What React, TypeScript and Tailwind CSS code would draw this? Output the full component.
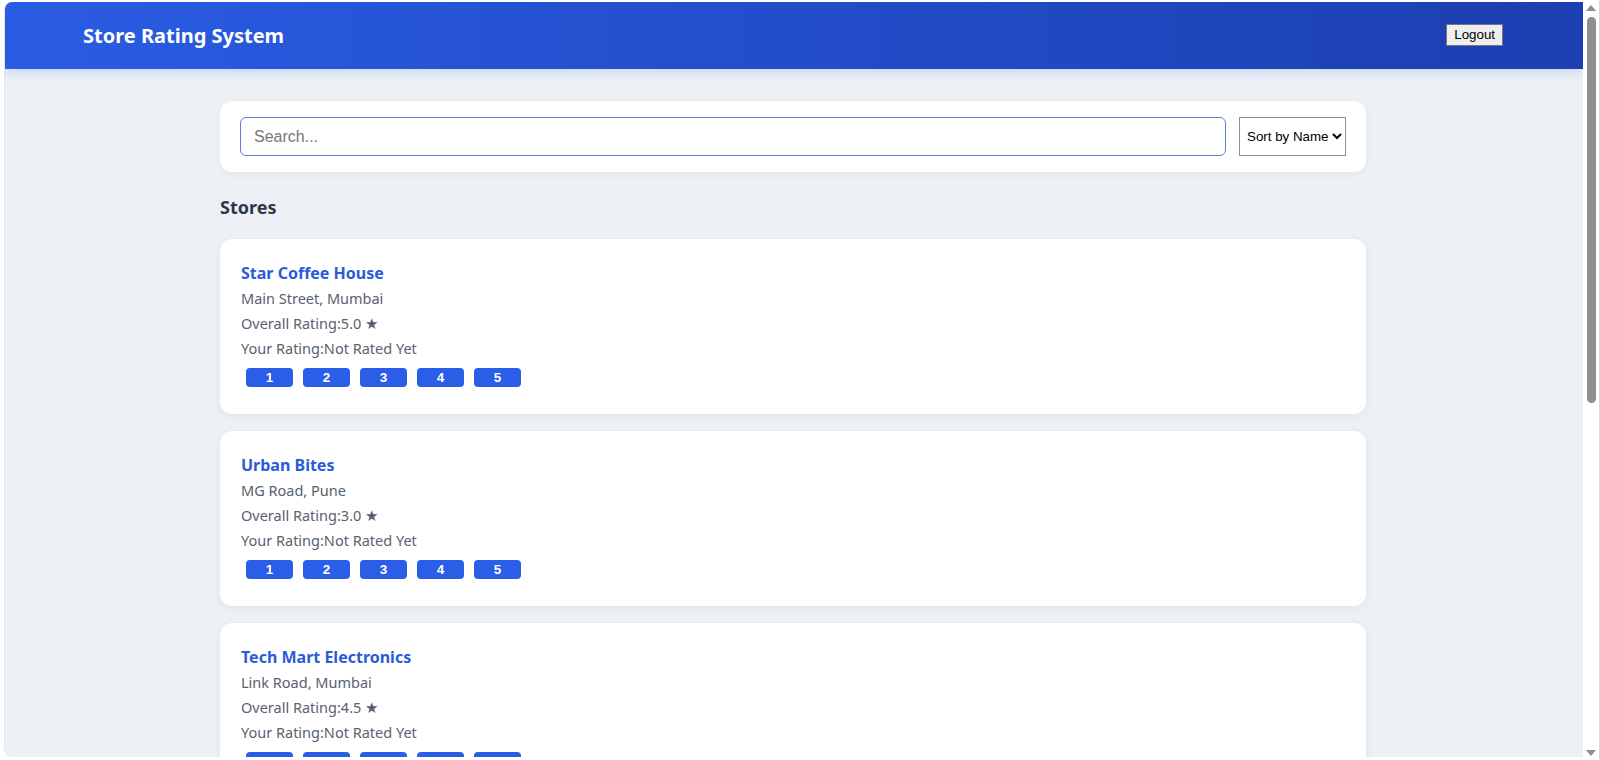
import React, { useState } from "react";

type Store = {
  id: number;
  name: string;
  address: string;
  rating: string;
};

const stores: Store[] = [
  { id: 1, name: "Star Coffee House", address: "Main Street, Mumbai", rating: "5.0" },
  { id: 2, name: "Urban Bites", address: "MG Road, Pune", rating: "3.0" },
  { id: 3, name: "Tech Mart Electronics", address: "Link Road, Mumbai", rating: "4.5" },
  { id: 4, name: "Green Grocers", address: "FC Road, Pune", rating: "4.0" },
];

const StoreCard: React.FC<{ store: Store }> = ({ store }) => (
  <div className="bg-white rounded-xl shadow-[0_2px_8px_rgba(0,0,0,0.06)] px-[21px] pt-[22px] pb-[27px]">
    <h3 className="text-[16px] leading-[24px] font-bold text-[#2b5bd8]">{store.name}</h3>
    <p className="mt-[1px] text-[14.5px] leading-[25px] text-[#596170]">{store.address}</p>
    <p className="text-[14.5px] leading-[25px] text-[#596170]">Overall Rating:{store.rating} ★</p>
    <p className="text-[14.5px] leading-[25px] text-[#596170]">Your Rating:Not Rated Yet</p>
    <div className="flex mt-[7px]">
      {[1, 2, 3, 4, 5].map((n) => (
        <button
          key={n}
          className="mx-[5px] w-[47px] h-[19px] rounded-[4px] bg-[#2b5ee6] text-white text-[13.5px] font-bold leading-[19px] font-['Liberation_Sans',Arial,sans-serif]"
        >
          {n}
        </button>
      ))}
    </div>
  </div>
);

const App: React.FC = () => {
  const [query, setQuery] = useState("");
  const [sort, setSort] = useState("name");

  return (
    <div className="w-[1600px] h-[760px] bg-white flex pl-[4px] pt-[2px] pb-[3px] overflow-hidden font-['Noto_Sans',sans-serif]">
      <div className="flex-1 flex flex-col rounded-l-lg overflow-hidden bg-[#edf1f6] border-l border-[#e2e5ea]">
        <header className="h-[67px] shrink-0 flex items-center justify-between pl-[78px] pr-[80px] bg-gradient-to-r from-[#2a5ce3] to-[#1c3fb1] shadow-[0_4px_10px_rgba(37,99,235,0.18)] relative z-10">
          <h1 className="text-white text-[20px] font-bold">Store Rating System</h1>
          <button className="px-[7px] h-[22px] -mt-[1px] bg-[#efefef] border border-[#767676] text-black text-[13.33px] leading-none font-['Liberation_Sans',Arial,sans-serif]">
            Logout
          </button>
        </header>

        <div className="pr-[2px]">
          <main className="w-[1146px] mx-auto pt-[32px]">
            <div className="bg-white rounded-xl shadow-[0_2px_8px_rgba(0,0,0,0.05)] px-[20px] py-[16px] flex gap-[13px]">
              <input
                autoFocus
                value={query}
                onChange={(e) => setQuery(e.target.value)}
                placeholder="Search..."
                className="flex-1 h-[39px] rounded-md border border-[#5b80d6] pl-[13px] text-[16px] outline-none font-['Liberation_Sans',Arial,sans-serif] placeholder:text-[#777]"
              />
              <select
                value={sort}
                onChange={(e) => setSort(e.target.value)}
                className="w-[107px] h-[39px] border border-[#8f8f8f] bg-white text-black text-[13.33px] pl-[3px] font-['Liberation_Sans',Arial,sans-serif]"
              >
                <option value="name">Sort by Name</option>
                <option value="rating">Sort by Rating</option>
              </select>
            </div>

            <h2 className="mt-[22px] mb-[18px] text-[18px] leading-[27px] font-bold text-[#2d3748]">Stores</h2>

            <div className="flex flex-col gap-[17px]">
              {stores.map((s) => (
                <StoreCard key={s.id} store={s} />
              ))}
            </div>
          </main>
        </div>
      </div>

      <div className="w-[17px] shrink-0 flex flex-col items-center bg-white border-r border-[#d9d9d9] -mt-[2px] -mb-[3px]">
        <svg width="10" height="6" viewBox="0 0 10 6" className="mt-[5px]">
          <path d="M5 0 L10 6 L0 6 Z" fill="#8f8f8f" />
        </svg>
        <div className="mt-[6px] w-[9px] h-[386px] rounded-full bg-[#8f8f8f]" />
        <div className="flex-1" />
        <svg width="10" height="6" viewBox="0 0 10 6" className="mb-[4px]">
          <path d="M0 0 L10 0 L5 6 Z" fill="#8f8f8f" />
        </svg>
      </div>
    </div>
  );
};

export default App;
